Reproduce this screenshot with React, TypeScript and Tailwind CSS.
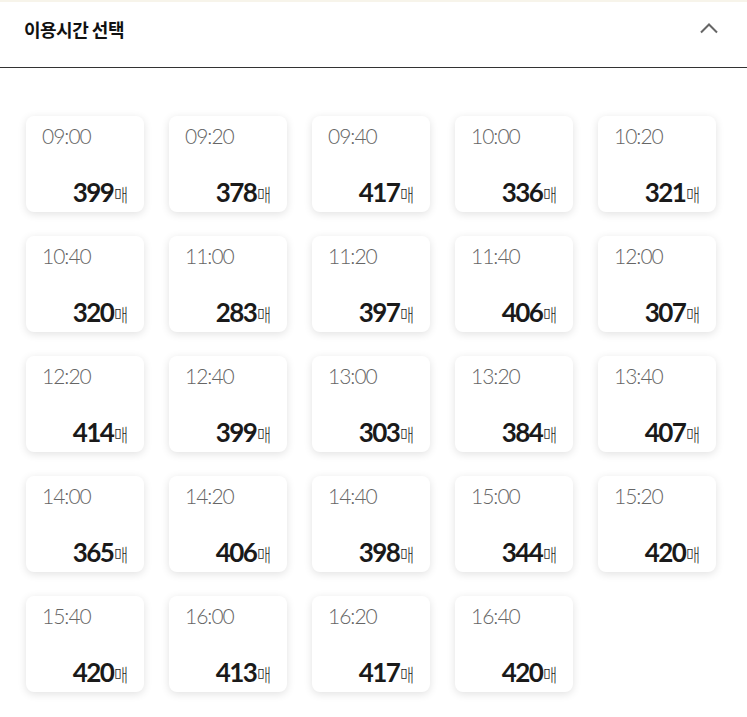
type Slot = { time: string; count: number };

const slots: Slot[] = [
  { time: "09:00", count: 399 },
  { time: "09:20", count: 378 },
  { time: "09:40", count: 417 },
  { time: "10:00", count: 336 },
  { time: "10:20", count: 321 },
  { time: "10:40", count: 320 },
  { time: "11:00", count: 283 },
  { time: "11:20", count: 397 },
  { time: "11:40", count: 406 },
  { time: "12:00", count: 307 },
  { time: "12:20", count: 414 },
  { time: "12:40", count: 399 },
  { time: "13:00", count: 303 },
  { time: "13:20", count: 384 },
  { time: "13:40", count: 407 },
  { time: "14:00", count: 365 },
  { time: "14:20", count: 406 },
  { time: "14:40", count: 398 },
  { time: "15:00", count: 344 },
  { time: "15:20", count: 420 },
  { time: "15:40", count: 420 },
  { time: "16:00", count: 413 },
  { time: "16:20", count: 417 },
  { time: "16:40", count: 420 },
];

const SlotCard = ({ time, count }: Slot) => (
  <button className="flex h-[96px] w-[118px] flex-col justify-between rounded-[8px] bg-white px-[16px] pt-[8px] pb-[6px] text-left shadow-[0_2px_8px_rgba(0,0,0,0.12)]">
    <span className="font-['Lato',sans-serif] text-[21px] font-light leading-[24px] tracking-[-1px] text-[#666]">
      {time}
    </span>
    <span className="flex items-baseline justify-end text-[#1a1a1a]">
      <span className="font-['Lato',sans-serif] text-[26px] font-bold leading-[28px] tracking-[-1.5px]">
        {count}
      </span>
      <span className="ml-[1px] mr-[-3px] inline-block origin-left scale-x-[0.85] font-['Noto_Sans_CJK_KR',sans-serif] text-[18px] font-light leading-[20px]">
        매
      </span>
    </span>
  </button>
);

export default function App() {
  return (
    <div className="min-h-[717px] w-[747px] bg-white">
      <div className="h-[2px] bg-[#f7f4ea]" />
      <div className="flex h-[66px] items-start justify-between border-b border-[#333] pt-[14px] pl-[24px] pr-[28px]">
        <h2 className="font-['Noto_Sans_CJK_KR',sans-serif] text-[18px] font-bold tracking-[-0.5px] text-[#111]">
          이용시간 선택
        </h2>
        <svg className="mt-[6px]" width="20" height="12" viewBox="0 0 20 12" fill="none">
          <polyline points="2,10.5 10,2.5 18,10.5" stroke="#666" strokeWidth="2" />
        </svg>
      </div>
      <div className="grid grid-cols-[repeat(5,118px)] gap-x-[25px] gap-y-[24px] px-[26px] pt-[48px] pb-[24px]">
        {slots.map((s) => (
          <SlotCard key={s.time} time={s.time} count={s.count} />
        ))}
      </div>
    </div>
  );
}
